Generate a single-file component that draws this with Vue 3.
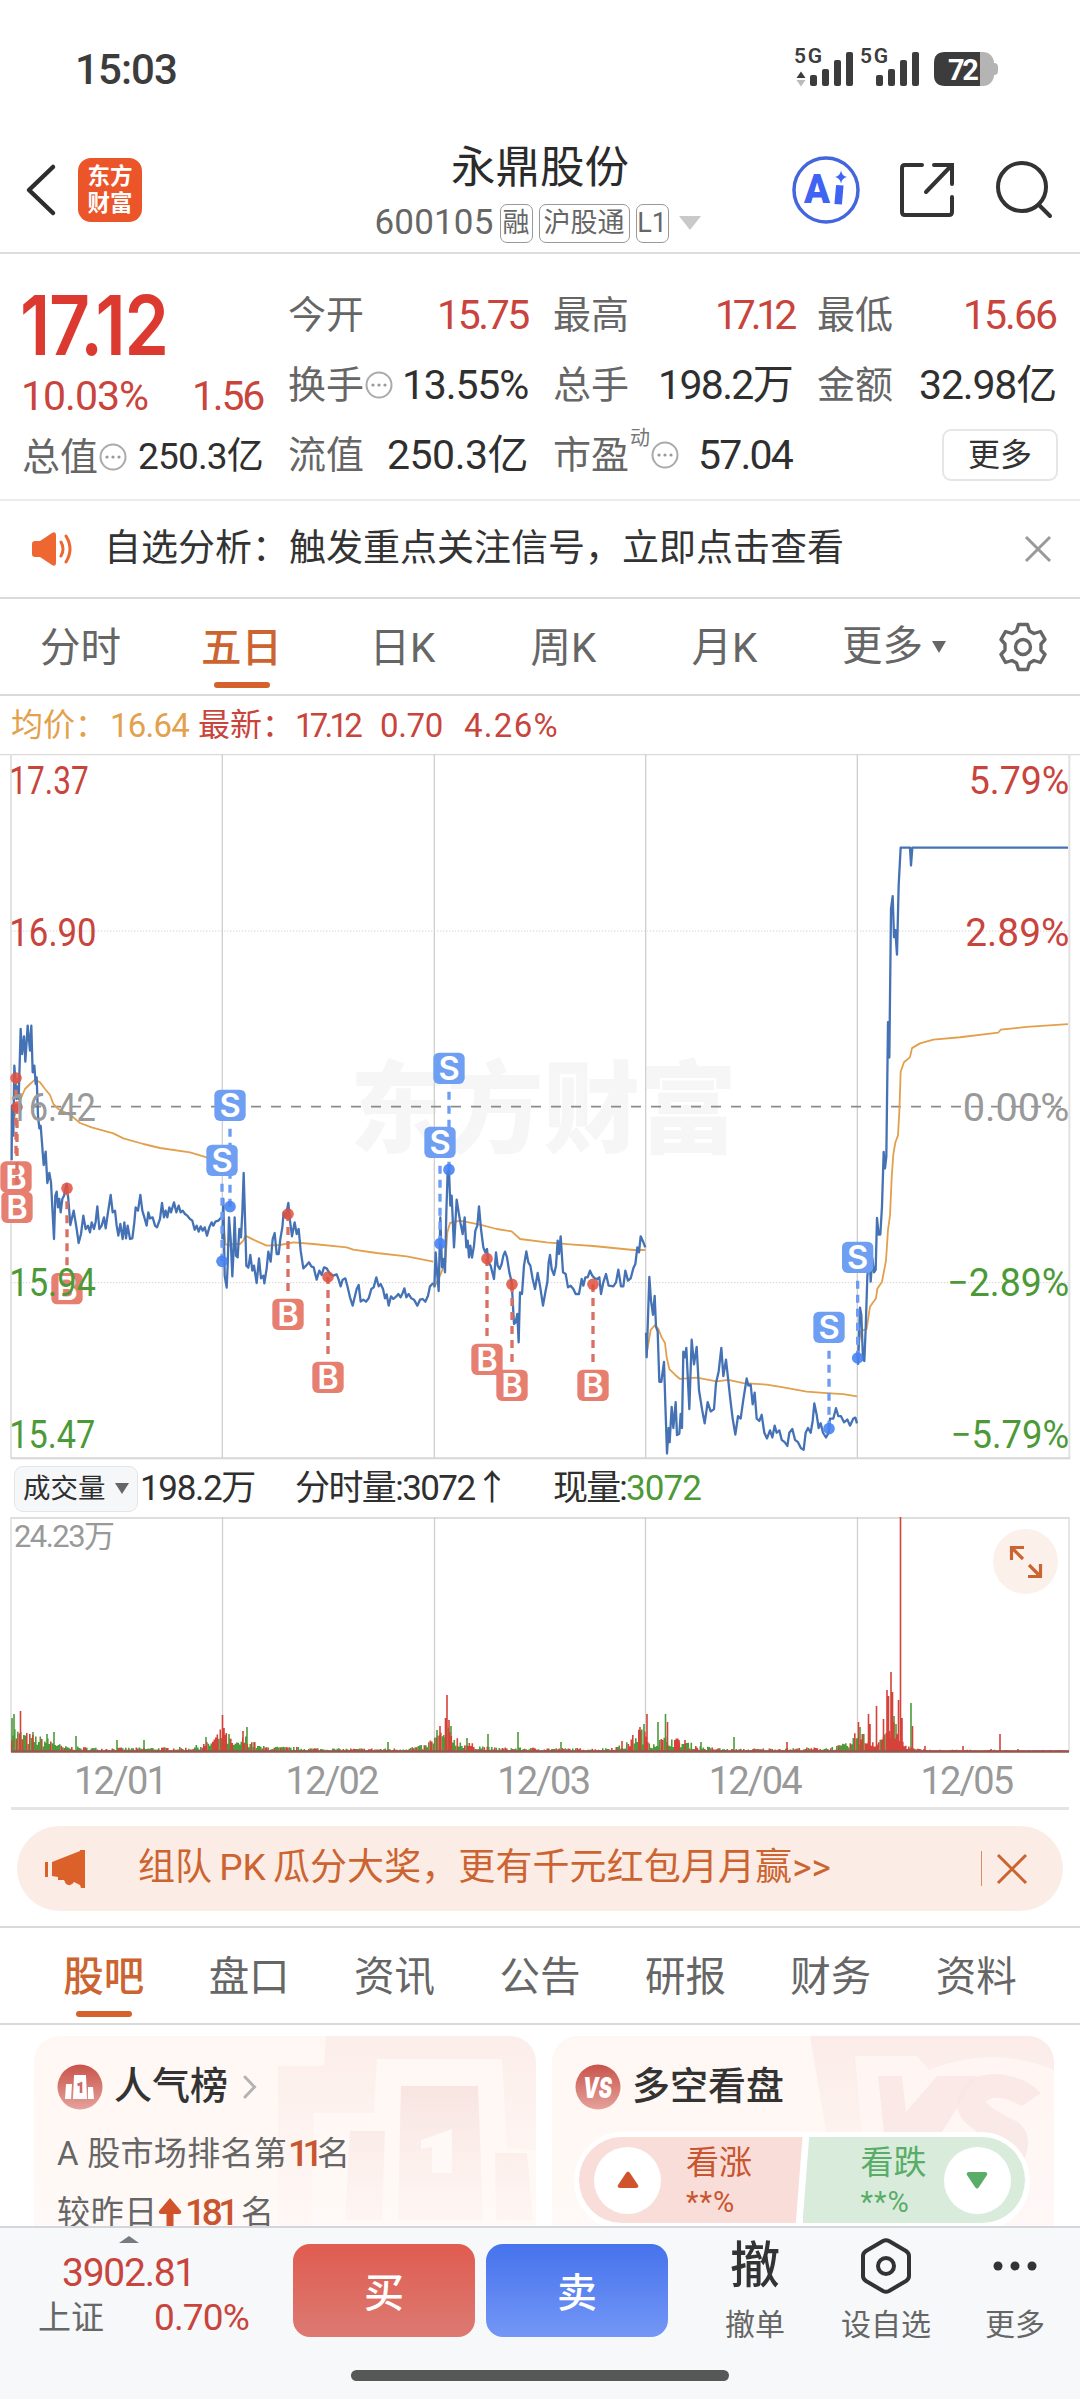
<template>
  <div class="page">
    <div class="status">
      <span v-fit="102" class="clock">15:03</span>
      <svg class="status-icons" width="206" height="54" viewBox="0 -10 206 54">
        <g fill="#3c3c3c">
          <text x="2" y="17" class="net" textLength="28">5G</text>
          <path d="M4.500 32 L9 25.500 L13.500 32 Z" />
          <path d="M4.500 34 L9 40.500 L13.500 34 Z" fill="#bbb" />
          <rect v-for="(h, i) in [11, 17, 26, 34]" :key="'a' + h" :x="18 + i * 12" :y="40 - h" width="7" :height="h" rx="2" />
          <text x="68" y="17" class="net" textLength="28">5G</text>
          <rect v-for="(h, i) in [11, 17, 26, 34]" :key="'b' + h" :x="84 + i * 12" :y="40 - h" width="7" :height="h" rx="2" />
        </g>
        <rect x="160" y="6" width="42" height="34" rx="11" fill="#b4b4b4" />
        <rect x="196" y="17" width="10" height="12" rx="4" fill="#b4b4b4" />
        <path d="M188 6 H153 Q142 6 142 17 V29 Q142 40 153 40 H188 Z" fill="#3c3c3c" />
        <text x="156" y="33.500" class="battery" textLength="31">72</text>
      </svg>
    </div>

    <header class="header">
      <div class="header-side">
        <svg width="34" height="54" viewBox="0 0 34 54"><path d="M30 4 L6 27 L30 50" fill="none" stroke="#2d2d2d" stroke-width="4.500" stroke-linecap="round" stroke-linejoin="round" /></svg>
        <div class="logo"><span>东方</span><span>财富</span></div>
      </div>
      <div class="title-box">
        <div class="title">永鼎股份</div>
        <div class="subtitle">
          <span v-fit="119" class="code">600105</span>
          <span class="tag">融</span>
          <span class="tag tag-wide">沪股通</span>
          <span class="tag">L1</span>
          <svg class="down" width="22" height="14" viewBox="0 0 22 14"><path d="M0 0 H22 L11 14 Z" fill="#c9c9c9" /></svg>
        </div>
      </div>
      <div class="header-side right">
        <svg width="70" height="70" viewBox="0 0 70 70">
          <circle cx="35" cy="35" r="32" fill="#fff" stroke="#4466dd" stroke-width="3.500" />
          <text x="13" y="48" class="ai" textLength="26" lengthAdjust="spacingAndGlyphs">A</text>
          <path d="M48.500 34 L47.500 45.500" stroke="#3f63f2" stroke-width="7.500" stroke-linecap="square" stroke-linejoin="round" />
          <path d="M50 15.500 Q51 21 56 22 Q51 23 50 28.500 Q49 23 44 22 Q49 21 50 15.500 Z" fill="#3f63f2" />
        </svg>
        <svg width="58" height="60" viewBox="0 0 58 60" fill="none" stroke="#333" stroke-width="4" stroke-linecap="round">
          <path d="M24 5 H7 Q4 5 4 8 V52 Q4 55 7 55 H51 Q54 55 54 52 V37" />
          <path d="M28 32 L53 6 M36 5 H54 V24" />
        </svg>
        <svg width="60" height="60" viewBox="0 0 60 60" fill="none" stroke="#333" stroke-width="4" stroke-linecap="round">
          <circle cx="27" cy="27" r="24" />
          <path d="M44 45 L55 56" />
        </svg>
      </div>
    </header>

    <section class="quote">
      <div class="quote-main">
        <div class="price-row"><span v-fit="172" class="price">17.12</span></div>
        <div class="pct-row"><span v-fit="127">10.03%</span><span v-fit="71">1.56</span></div>
        <div class="cell total-row">
          <span class="label">总值</span><InfoDot />
          <span v-fit="125" class="val small">250.3亿</span>
        </div>
      </div>
      <div v-for="c in cells" :key="c.label" class="cell">
        <span class="label">{{ c.label }}</span>
        <sup v-if="c.sup" class="sup">{{ c.sup }}</sup>
        <InfoDot v-if="c.dot" />
        <span v-fit="c.w" class="val" :class="{ red: c.red }">{{ c.value }}</span>
      </div>
      <div class="cell more-cell"><button class="more-btn">更多</button></div>
    </section>

    <div class="notice">
      <svg width="44" height="36" viewBox="0 0 44 36">
        <path d="M1 13 Q1 10 4 10 H9 L21 2 Q25 0 25 4 V32 Q25 36 21 34 L9 26 H4 Q1 26 1 23 Z" fill="#ee6630" />
        <path d="M30 11 Q34 18 30 25 M35 5 Q43 18 35 31" fill="none" stroke="#ee6630" stroke-width="3" stroke-linecap="round" />
      </svg>
      <span v-fit="740" class="notice-text">自选分析：触发重点关注信号，立即点击查看</span>
      <svg class="close" width="28" height="28" viewBox="0 0 28 28"><path d="M2 2 L26 26 M26 2 L2 26" stroke="#999" stroke-width="3" /></svg>
    </div>

    <nav class="period">
      <span v-for="t in periods" :key="t" class="tab" :class="{ active: t === '五日' }">{{ t }}</span>
      <span class="tab-more">更多<svg width="14" height="12" viewBox="0 0 14 12"><path d="M0 0 H14 L7 12 Z" fill="#666" /></svg></span>
      <svg class="gear" width="50" height="50" viewBox="0 0 50 50" fill="none" stroke="#666" stroke-width="3.400" stroke-linejoin="round">
        <path d="M20.500 2.500 H29.500 L31.500 9 L36 11.500 L42.500 9.500 L47 17.500 L43 22 V28 L47 32.500 L42.500 40.500 L36 38.500 L31.500 41 L29.500 47.500 H20.500 L18.500 41 L14 38.500 L7.500 40.500 L3 32.500 L7 28 V22 L3 17.500 L7.500 9.500 L14 11.500 L18.500 9 Z" />
        <circle cx="25" cy="25" r="7.500" />
      </svg>
    </nav>

    <div class="legend">
      <span class="avg">均价：</span><span v-fit="79" class="avg n1">16.64</span>
      <span class="lab">最新：</span><span v-fit="64" class="n2">17.12</span>
      <span v-fit="63" class="n3">0.70</span>
      <span v-fit="95" class="n4">4.26%</span>
    </div>

    <!-- price chart, drawn in thirds of a pixel -->
    <svg class="chart" width="1080" height="706" viewBox="0 0 3240 2118">
      <text class="watermark" x="1050" y="1172" textLength="1160" lengthAdjust="spacingAndGlyphs">东方财富</text>
      <path d="M0 2 H3240" stroke="#d9d9d9" stroke-width="4" />
      <path d="M33 0 V2114 M3208 0 V2114" stroke="#e2e2e2" stroke-width="6" />
      <path d="M667 0 V2114 M1303 0 V2114 M1937 0 V2114 M2572 0 V2114" stroke="#cfcfcf" stroke-width="4" />
      <path d="M33 531 H3208 M33 1586 H3208" stroke="#d2d2d2" stroke-width="3" stroke-dasharray="4 5" />
      <path d="M33 2113 H3210" stroke="#d6d6d6" stroke-width="6" />
      <path d="M33 1058 H3208" stroke="#8b8b8b" stroke-width="5" stroke-dasharray="30 30" />
      <g fill="none" stroke-linejoin="round">
        <polyline v-for="(l, i) in lines" :key="i" :points="l.points" :class="l.kind" :transform="l.at" vector-effect="non-scaling-stroke" />
      </g>
      <g v-for="(m, i) in marks" :key="'m' + i" :class="m.t === 'B' ? 'buy' : 'sell'">
        <path :d="`M${m.x} ${m.y + (m.t === 'B' ? -70 : 70)} V${m.dot}`" class="stem" />
        <circle :cx="m.x" :cy="m.dot" r="17.500" class="dot" />
        <rect :x="m.x - 47" :y="m.y - 47" width="94" height="94" rx="17" class="box" />
        <text :x="m.x" :y="m.y + 35" class="letter">{{ m.t }}</text>
      </g>
      <g class="axis">
        <text v-for="a in leftAxis" :key="a.v" x="28" :y="a.y" :textLength="a.w" lengthAdjust="spacingAndGlyphs" :class="a.c">{{ a.v }}</text>
        <text v-for="a in rightAxis" :key="a.v" :x="3208 - a.w" :y="a.y" :textLength="a.w" lengthAdjust="spacingAndGlyphs" :class="a.c">{{ a.v }}</text>
      </g>
    </svg>

    <div class="vol-head">
      <span class="vol-btn">成交量<svg width="14" height="11" viewBox="0 0 14 11"><path d="M0 0 H14 L7 11 Z" fill="#666" /></svg></span>
      <span v-fit="115" class="v1">198.2万</span>
      <span v-fit="213" class="v2">分时量:3072↑</span>
      <span v-fit="73" class="v3">现量:</span><span v-fit="75" class="green">3072</span>
    </div>

    <div class="vol">
      <svg width="1080" height="236" viewBox="0 0 1080 236">
        <path d="M11 1 H1069" stroke="#dedede" stroke-width="2" />
        <path d="M11 0 V235 M1069 0 V235" stroke="#dedede" stroke-width="1.500" />
        <path d="M222.500 0 V235 M434.500 0 V235 M645.500 0 V235 M857.500 0 V235" stroke="#d0d0d0" stroke-width="1.300" />
        <path :d="volume.green" stroke="#4d9a3a" stroke-width="1.600" />
        <path :d="volume.red" stroke="#d5423a" stroke-width="1.600" />
        <path d="M11 234.500 H1069" stroke="#94564f" stroke-width="2.400" />
        <text x="14" y="30" class="vol-max" textLength="101">24.23万</text>
      </svg>
      <div class="expand">
        <svg width="34" height="34" viewBox="0 0 34 34" fill="none" stroke="#cc6431" stroke-width="3.200">
          <path d="M15 2.500 H2.500 V15 M3 3 L14 14 M19 31.500 H31.500 V19 M31 31 L20 20" />
        </svg>
      </div>
    </div>
    <div class="dates"><span v-for="d in dates" :key="d"><i v-fit="92">{{ d }}</i></span></div>

    <div class="promo">
      <svg width="44" height="40" viewBox="0 0 44 40">
        <path d="M1 13 H4 V28 H1 Z M8 13 L36 2 V1 H41 V39 H37 L36 36 L30 33 Q27 38 22 35 L20 31 L14 31 L14 28 L8 27 Z" fill="#dc6029" />
      </svg>
      <span v-fit="693" class="promo-text">组队<em>PK</em>瓜分大奖，更有千元红包月月赢&gt;&gt;</span>
      <i class="promo-line"></i>
      <svg width="32" height="32" viewBox="0 0 32 32"><path d="M2 2 L30 30 M30 2 L2 30" stroke="#cc6431" stroke-width="3" /></svg>
    </div>

    <nav class="sections">
      <span v-for="t in sections" :key="t" class="sec" :class="{ active: t === '股吧' }">{{ t }}</span>
    </nav>

    <div class="cards">
      <div class="card">
        <svg class="card-bg" width="502" height="192" viewBox="0 0 502 192">
          <defs>
            <linearGradient id="fade" x1="0" y1="0" x2="0" y2="1">
              <stop offset="0" stop-color="#f6dedb" stop-opacity=".75" />
              <stop offset="1" stop-color="#fbeae6" stop-opacity=".25" />
            </linearGradient>
          </defs>
          <path d="M292 0 H502 V115 L473 112 L468 23 H343 L340 77 H280 L277 192 H244 V30 H290 Z" fill="url(#fade)" opacity=".5" />
          <path d="M316 95 H351 L348 184 H311 Z M367 50 H444 L449 184 H364 Z M461 117 H493 L499 184 H462 Z" fill="url(#fade)" />
          <path d="M387 104 L418 93 V137 H398 V111 L387 113 Z" fill="#fef8f6" />
        </svg>
        <div class="card-head">
          <svg width="46" height="46" viewBox="0 0 46 46">
            <defs>
              <linearGradient id="badge" x1="0" y1="0" x2="0" y2="1">
                <stop offset="0" stop-color="#c8534b" /><stop offset="1" stop-color="#e5a29b" />
              </linearGradient>
            </defs>
            <circle cx="23" cy="23" r="22.500" fill="url(#badge)" />
            <path d="M9 20 H15 L14 35 H8 Z M17 11 H29 L30 35 H16 Z M31 23 H36 L37 35 H31 Z" fill="#fff" />
            <path d="M20.500 21 L24 19.500 V29" fill="none" stroke="#cf6b64" stroke-width="2.600" />
          </svg>
          <span class="card-title">人气榜</span>
          <svg width="14" height="24" viewBox="0 0 14 24"><path d="M2 2 L11.500 12 L2 22" fill="none" stroke="#b3b3b3" stroke-width="3" stroke-linecap="round" /></svg>
        </div>
        <p class="rank"><span v-fit="230">A 股市场排名第</span><b v-fit="29">11</b>名</p>
        <p class="rank second">
          <span v-fit="101">较昨日</span>
          <svg width="24" height="31" viewBox="0 0 24 31"><path d="M12 0 L23 13 Q24 16 21 16 H15.500 V30 H8.500 V16 H3 Q0 16 1 13 Z" fill="#d1532b" /></svg>
          <b v-fit="50">181</b><span class="gap">名</span>
        </p>
      </div>

      <div class="card">
        <svg class="card-bg" width="502" height="192" viewBox="0 0 502 192">
          <path d="M258 0 H502 V192 H290 Z" fill="url(#fade)" opacity=".6" />
          <path d="M303 20 H365 L377 34 Q440 8 502 34 V192 H318 Z" fill="#fff8f5" opacity=".8" />
          <path d="M326 40 H350 L354 76 L385 40 H425 L372 125 H335 Z" fill="#f9e6e3" opacity=".8" />
          <path d="M489 57 Q470 38 440 38 Q408 40 405 66 Q405 82 420 92 Q432 100 428 108 Q418 116 390 104 L372 128 H470 Q484 100 466 86 Q440 74 434 66 Q444 56 470 70 Z" fill="#f9e6e3" opacity=".8" />
        </svg>
        <div class="card-head">
          <svg width="46" height="46" viewBox="0 0 46 46">
            <circle cx="23" cy="23" r="22.500" fill="url(#badge)" />
            <text x="8" y="34" class="vs-icon" textLength="29" lengthAdjust="spacingAndGlyphs">VS</text>
          </svg>
          <span class="card-title">多空看盘</span>
        </div>
        <div class="vote">
          <div class="vote-up">
            <span class="knob"><svg width="22" height="18" viewBox="0 0 22 18"><path d="M9 2 Q11 -1 13 2 L21 14 Q22 17 19 17 H3 Q0 17 1 14 Z" fill="#d1532b" /></svg></span>
            <span class="vote-text">看涨<small>**%</small></span>
          </div>
          <div class="vote-down">
            <span class="vote-text">看跌<small>**%</small></span>
            <span class="knob"><svg width="22" height="18" viewBox="0 0 22 18"><path d="M9 16 Q11 19 13 16 L21 4 Q22 1 19 1 H3 Q0 1 1 4 Z" fill="#5aad68" /></svg></span>
          </div>
        </div>
      </div>
    </div>

    <footer class="bottom">
      <div class="index">
        <svg width="20" height="7" viewBox="0 0 20 7"><path d="M10 0 L20 7 H0 Z" fill="#777a80" /></svg>
        <span v-fit="133" class="index-val">3902.81</span>
        <div class="index-row"><span>上证</span><span v-fit="95" class="index-pct">0.70%</span></div>
      </div>
      <button class="trade buy-btn">买</button>
      <button class="trade sell-btn">卖</button>
      <div class="tool cancel"><div class="tool-icon char">撤</div><span>撤单</span></div>
      <div class="tool pick">
        <div class="tool-icon">
          <svg width="52" height="56" viewBox="0 0 52 56" fill="none" stroke="#333" stroke-width="4" stroke-linejoin="round">
            <path d="M23 3 Q26 1.500 29 3 L46 13 Q49 15 49 18 V38 Q49 41 46 43 L29 53 Q26 54.500 23 53 L6 43 Q3 41 3 38 V18 Q3 15 6 13 Z" />
            <circle cx="26" cy="28" r="8" />
          </svg>
        </div>
        <span>设自选</span>
      </div>
      <div class="tool others">
        <div class="tool-icon">
          <svg width="44" height="12" viewBox="0 0 44 12" fill="#333"><circle cx="5" cy="6" r="4.500" /><circle cx="22" cy="6" r="4.500" /><circle cx="39" cy="6" r="4.500" /></svg>
        </div>
        <span>更多</span>
      </div>
      <i class="home-bar"></i>
    </footer>
  </div>
</template>

<script setup>
import { h } from 'vue'

// tracks a piece of text out (or in) to the given width
const vFit = {
  mounted(el, { value }) {
    const extra = value - el.getBoundingClientRect().width / (el.classList.contains('price') ? 0.86 : 1)
    el.style.letterSpacing = `${extra / el.textContent.length}px`
  }
}

const InfoDot = () => h('svg', { width: 28, height: 30, viewBox: '0 0 28 30' }, [
  h('circle', { cx: 14, cy: 15, r: 12.5, fill: 'none', stroke: '#aaa', 'stroke-width': 2 }),
  ...[8, 14, 20].map((cx) => h('circle', { cx, cy: 15, r: 1.6, fill: '#999' }))
])

const cells = [
  { label: '今开', value: '15.75', w: 91, red: true },
  { label: '最高', value: '17.12', w: 77, red: true },
  { label: '最低', value: '15.66', w: 93, red: true },
  { label: '换手', value: '13.55%', w: 126, dot: true },
  { label: '总手', value: '198.2万', w: 134 },
  { label: '金额', value: '32.98亿', w: 137 },
  { label: '流值', value: '250.3亿', w: 141 },
  { label: '市盈', value: '57.04', w: 94, sup: '动', dot: true }
]

const periods = ['分时', '五日', '日K', '周K', '月K']
const sections = ['股吧', '盘口', '资讯', '公告', '研报', '财务', '资料']
const dates = ['12/01', '12/02', '12/03', '12/04', '12/05']

const near = 'translate(0 735)'
const mid = 'translate(1200 735)'
const far = 'translate(1860 -45) scale(1 1.4158)'

const lines = [
  { kind: 'mean', at: near, points: '36,380 50,330 62,300 75,270 90,255 105,242 120,250 135,270 150,288 160,315 175,330 195,340 220,355 240,372 275,385 340,403 370,418 430,435 480,447 570,460 620,475 664,492' },
  { kind: 'mean', at: near, points: '670,660 676,735 686,740 700,735 720,735 730,725 736,710 760,722 800,740 840,738 880,730 940,735 1040,745 1060,752 1130,762 1220,772 1300,788' },
  { kind: 'mean', at: mid, points: '104,862 120,830 136,790 142,700 150,672 180,665 240,677 290,690 335,697 360,720 440,730 520,737 580,741 640,747 700,753 736,753' },
  { kind: 'mean', at: far, points: '82,1295 92,1252 105,1242 115,1250 125,1268 135,1280 140,1310 148,1335 165,1347 180,1356 230,1353 290,1361 325,1358 370,1365 440,1368 490,1374 560,1383 620,1386 670,1388 711,1393' },
  { kind: 'mean', at: far, points: '714,1300 722,1255 740,1250 750,1203 768,1185 772,1165 786,1150 798,1105 804,1040 810,1010 815,930 820,880 826,855 834,840 838,790 842,705 852,685 870,674 876,655 900,645 940,637 1020,632 1135,622 1142,616 1220,610 1344,604' },
  { kind: 'last', at: near, points: '35,484 36,320 40,410 43,200 47,260 49,300 52,262 56,300 62,90 66,165 72,112 76,188 83,80 90,155 94,80 98,220 103,200 107,255 110,235 114,350 118,388 122,380 131,498 137,458 142,552 148,522 153,550 162,720 166,590 170,578 174,625 178,600 182,640 187,600 192,590 200,555 205,600 211,678 221,635 230,690 236,732 243,705 250,650 257,690 264,680 270,700 275,670 282,690 287,668 292,622 298,690 305,680 312,655 317,688 324,640 332,588 338,640 345,635 350,680 355,710 361,675 368,720 373,670 378,718 383,680 390,720 397,718 403,670 407,625 414,635 421,588 427,635 433,655 440,680 445,640 450,658 458,655 465,680 471,685 480,660 486,612 492,655 497,635 502,655 508,625 513,640 522,610 529,640 536,620 542,640 548,635 555,645 562,650 570,660 577,665 584,692 590,680 596,698 602,682 608,695 614,685 621,710 628,685 635,670 640,680 646,668 655,665 664,655' },
  { kind: 'last', at: near, points: '667,720 670,600 674,830 680,866 683,800 687,655 692,720 697,832 700,770 704,655 708,770 713,775 718,690 723,715 727,640 731,522 736,690 739,800 745,806 751,768 757,815 762,800 770,852 777,778 783,838 790,830 793,853 800,808 805,758 812,788 818,720 824,702 830,765 836,765 841,720 847,685 851,640 857,655 865,612 870,665 876,712 884,670 890,705 896,690 902,755 910,808 918,800 927,790 934,802 941,805 950,842 958,815 965,828 972,805 980,808 990,825 1000,830 1010,826 1016,842 1022,862 1028,842 1036,838 1043,865 1050,895 1058,920 1064,895 1070,870 1076,858 1082,908 1090,902 1098,908 1106,898 1114,870 1121,865 1129,835 1136,862 1142,855 1149,870 1155,898 1160,886 1166,920 1173,892 1180,900 1188,893 1195,885 1202,895 1208,882 1213,868 1219,895 1226,885 1234,898 1242,902 1252,920 1260,902 1268,900 1276,908 1284,890 1290,862 1300,852' },
  { kind: 'last', at: mid, points: '103,865 107,760 112,830 116,876 121,655 126,805 131,780 135,820 139,640 143,520 147,515 151,620 155,590 162,745 170,602 176,640 182,675 188,705 194,655 199,745 203,725 207,775 211,740 216,776 222,740 226,695 232,680 237,622 243,690 250,745 256,760 261,750 265,790 272,800 282,840 288,760 293,800 299,810 305,795 310,770 315,758 321,775 328,820 335,850 342,975 347,970 352,945 356,1030 360,880 366,885 372,800 379,757 385,790 391,800 398,840 405,870 413,822 420,860 429,920 436,880 442,850 446,790 450,768 455,810 462,828 468,800 473,725 477,765 482,712 489,820 497,825 504,865 512,860 520,870 527,885 537,885 545,840 550,860 556,835 563,835 570,815 577,830 584,838 592,840 598,835 603,885 610,850 618,825 626,860 640,862 648,850 655,812 663,862 670,862 676,815 684,845 692,838 700,808 706,795 712,745 717,760 722,712 730,730 736,745' },
  { kind: 'last', at: far, points: '78,1258 80,1310 88,1140 93,1190 99,1220 104,1180 108,1245 113,1255 118,1362 124,1362 132,1320 137,1430 141,1514 146,1460 149,1490 155,1415 160,1460 167,1405 171,1475 178,1472 182,1430 186,1460 190,1298 195,1310 199,1290 208,1420 215,1273 222,1325 230,1288 237,1380 246,1420 254,1450 263,1405 272,1425 282,1420 288,1365 296,1340 304,1290 310,1350 318,1315 325,1360 331,1400 338,1440 346,1474 354,1435 362,1440 370,1400 380,1355 385,1370 392,1368 398,1410 404,1385 410,1440 418,1445 425,1432 433,1470 441,1482 450,1465 457,1480 464,1455 470,1470 478,1465 485,1485 494,1490 502,1498 508,1470 517,1462 525,1485 534,1490 543,1503 551,1506 557,1470 564,1460 572,1470 578,1445 583,1408 590,1432 596,1460 602,1450 609,1470 618,1480 626,1470 630,1440 640,1440 648,1418 655,1435 663,1435 672,1448 682,1442 690,1455 700,1440 706,1438 711,1450' },
  { kind: 'last', at: far, points: '714,1326 720,1205 724,1220 729,1315 733,1318 737,1250 742,1140 748,1085 752,1150 757,1100 762,1130 767,1125 771,1015 776,1050 781,1050 786,990 791,875 795,910 799,885 804,600 808,675 813,360 818,333 822,420 826,405 831,457 836,310 842,230 870,230 873,268 877,230 1344,230' }
]

// [type, x, badge y, dot y]
const marks = [
  ['B', 48, 1269, 972], ['B', 51, 1360, 1059], ['B', 201, 1604, 1303],
  ['S', 690, 1054, 1358], ['S', 666, 1219, 1522], ['B', 864, 1681, 1380], ['B', 984, 1870, 1569],
  ['S', 1347, 943, 1247], ['S', 1320, 1165, 1469], ['B', 1461, 1816, 1514], ['B', 1536, 1894, 1591], ['B', 1779, 1894, 1591],
  ['S', 2487, 1720, 2024], ['S', 2573, 1510, 1812]
].map(([t, x, y, dot]) => ({ t, x, y, dot }))

const leftAxis = [
  { v: '17.37', y: 120, w: 238, c: 'up' },
  { v: '16.90', y: 576, w: 262, c: 'up' },
  { v: '16.42', y: 1101, w: 260, c: 'flat' },
  { v: '15.94', y: 1627, w: 260, c: 'down' },
  { v: '15.47', y: 2083, w: 258, c: 'down' }
]
const rightAxis = [
  { v: '5.79%', y: 120, w: 302, c: 'up' },
  { v: '2.89%', y: 576, w: 312, c: 'up' },
  { v: '0.00%', y: 1101, w: 320, c: 'flat' },
  { v: '−2.89%', y: 1627, w: 366, c: 'down' },
  { v: '−5.79%', y: 2083, w: 356, c: 'down' }
]

// envelope of the minute volume, then the single minutes that stick out
const envelope = [[11, 30], [16, 20], [30, 15], [55, 10], [62, 5], [100, 3.5], [190, 4], [210, 9], [222, 20], [235, 7], [245, 14], [260, 5], [300, 4], [330, 3], [400, 3], [425, 6], [437, 16], [449, 20], [462, 9], [490, 4], [600, 3], [625, 6], [640, 22], [652, 9], [668, 14], [700, 5], [730, 2.5], [830, 4], [850, 8], [858, 20], [866, 14], [878, 10], [890, 30], [904, 8], [915, 3], [930, 2], [1068, 1.5]]
const spikes = [
  [12, 34, 'g'], [14, 38, 'g'], [20.5, 41, 'r'], [33, 20, 'g'], [47, 18, 'g'], [54, 20, 'g'], [76, 16, 'g'], [117, 12, 'g'], [144, 12, 'g'], [206, 15, 'g'],
  [222.5, 37, 'r'], [224, 24, 'r'], [229, 18, 'g'], [243, 21, 'r'], [247, 25, 'g'], [254, 10, 'g'], [388, 10, 'g'], [437, 22, 'g'], [440, 26, 'r'],
  [445.5, 34, 'r'], [447, 57, 'r'], [449, 32, 'r'], [451, 26, 'g'], [467, 14, 'g'], [488, 18, 'g'], [518, 20, 'g'], [561, 10, 'g'], [622, 11, 'r'], [640, 25, 'r'],
  [644, 28, 'g'], [647, 38, 'r'], [658, 30, 'g'], [665.5, 38, 'g'], [667.5, 30, 'r'], [679, 12, 'r'], [685, 12, 'r'], [701, 10, 'g'], [734, 15, 'g'], [787, 10, 'r'],
  [858.5, 30, 'r'], [860, 25, 'g'], [868.5, 38, 'r'], [870, 28, 'r'], [876.5, 46, 'r'], [883.5, 33, 'r'], [887, 62, 'r'], [888.5, 56, 'r'], [891, 80, 'r'], [892.5, 60, 'r'], [894, 36, 'g'],
  [896, 28, 'g'], [898.5, 52, 'r'], [900.5, 235, 'r'], [902, 34, 'r'], [911, 49, 'g'], [912.5, 26, 'r'], [925, 6, 'r'], [963, 6, 'r'], [991, 3, 'r'], [1000, 18, 'r'], [1018, 3, 'r']
]

function buildVolume() {
  const out = { red: '', green: '' }
  let seed = 7
  const rand = () => {
    seed = (seed * 16807) % 2147483647
    return seed / 2147483647
  }
  let k = 0
  for (let x = 11.8; x < 1068; x += 1.5) {
    while (envelope[k + 1][0] < x) k++
    const [x0, y0] = envelope[k]
    const [x1, y1] = envelope[k + 1]
    const level = y0 + ((y1 - y0) * (x - x0)) / (x1 - x0)
    const height = Math.max(1.5, level * (0.4 + rand() * 0.85))
    const key = rand() > (x > 860 ? 0.2 : 0.6) ? 'red' : 'green'
    out[key] += `M${x.toFixed(1)} 235v-${height.toFixed(1)}`
  }
  for (const [x, height, c] of spikes) out[c === 'r' ? 'red' : 'green'] += `M${x} 235v-${height}`
  return out
}
const volume = buildVolume()
</script>

<style>
body { background: #fff; }
</style>

<style scoped>
.page {
  width: 1080px;
  height: 2400px;
  overflow: hidden;
  background: #fff;
  color: #333;
  font-family: Roboto, "Noto Sans CJK SC", sans-serif;
  line-height: 1.2;
  display: flex;
  flex-direction: column;
  white-space: nowrap;
}
.page > * { flex: none; box-sizing: border-box; }
svg { display: block; flex: none; }
i, em { font-style: normal; }

.status {
  height: 130px;
  padding: 46px 82px 0 75px;
  display: flex;
  justify-content: space-between;
}
.status-icons { margin-top: -10px; }
.clock { font-size: 42px; font-weight: 500; line-height: 48px; color: #3c3c3c; height: 48px; }
.net { font-size: 21px; font-weight: 600; }
.battery { font-size: 29px; font-weight: 700; fill: #fff; }

.header {
  height: 124px;
  border-bottom: 2px solid #dcdcdc;
  display: grid;
  grid-template-columns: 300px 480px 300px;
}
.header-side { display: flex; align-items: center; padding: 0 0 3px 23px; gap: 21px; }
.logo {
  width: 64px; height: 64px; border-radius: 13px; background: #ec5429; color: #fff;
  display: flex; flex-direction: column; align-items: center; justify-content: center;
  font-size: 22.500px; font-weight: 700; line-height: 27px;
}
.right { padding: 0 25px 3px 0; justify-content: flex-end; gap: 39px; }
.right svg:first-child { margin-right: -2px; }
.title-box { display: flex; flex-direction: column; align-items: center; }
.title { font-size: 44.500px; line-height: 56px; margin-top: 10px; color: #2b2b2b; }
.subtitle { display: flex; align-items: center; height: 42px; margin-top: 6px; margin-left: -5px; color: #666; }
.code { font-size: 35px; }
.tag {
  box-sizing: border-box; height: 39px; width: 33px; border: 1.500px solid #999; border-radius: 7px;
  font-size: 27px; line-height: 37px; margin-left: 6px; display: flex; justify-content: center;
}
.tag-wide { width: 91px; }
.down { margin-left: 10px; }
.ai { font: 900 40px Roboto; fill: #3f63f2; }

.quote {
  height: 247px;
  padding: 26px 24px 0 22px;
  border-bottom: 2px solid #ececec;
  display: grid;
  grid-template-columns: 241px 240px 239px 239px;
  grid-template-rows: 70px 70px 70px;
  column-gap: 25px;
}
.quote-main { grid-row: 1 / 4; }
.price-row { height: 90px; display: flex; align-items: center; }
.price {
  font: 600 83px/90px Inter, Roboto, sans-serif; color: #dc3a31;
  transform: scaleX(.86); transform-origin: left; margin-left: -2px;
}
.pct-row { height: 53px; display: flex; align-items: center; justify-content: space-between; font-size: 41px; color: #c8443c; }
.pct-row span:first-child { margin-left: -1px; }
.cell { display: flex; align-items: center; font-size: 41px; line-height: 60px; color: #2f2f2f; }
.total-row { height: 67px; }
.label { font-size: 38px; color: #666; }
.cell svg { margin-left: 1px; }
.val { margin-left: auto; }
.small { font-size: 37px; }
.red { color: #c8443c; }
.sup { font-size: 20px; line-height: 20px; color: #777; align-self: flex-start; margin: 8px 0 0 1px; }
.more-cell { justify-content: flex-end; }
.more-btn {
  width: 116px; height: 52px; border: 2px solid #e6e6e6; border-radius: 9px; background: #fff; padding: 0;
  font: 32px/46px Roboto, "Noto Sans CJK SC", sans-serif; color: #333; margin: 0 -2px 0 0;
}

.notice { height: 98px; border-bottom: 2px solid #dadada; display: flex; align-items: center; padding: 0 28px 0 31px; }
.notice-text { font-size: 37px; margin-left: 29px; }
.close { margin-left: auto; }

.period { height: 97px; border-bottom: 2px solid #dadada; display: flex; align-items: center; color: #666; font-size: 40.500px; }
.tab { width: 161px; height: 100%; display: flex; flex-direction: column; align-items: center; line-height: 98px; }
.tab::after, .sec::after { content: ""; width: 56px; height: 6px; border-radius: 3px; margin-top: -15px; }
.active { color: #cc6431; font-weight: 500; }
.active::after { background: #d5622d; }
.tab-more { display: flex; align-items: center; margin-left: 37px; gap: 9px; }
.gear { margin-left: 52px; }

.legend { height: 58px; display: flex; align-items: center; padding: 1px 0 0 11px; font-size: 33px; line-height: 57px; color: #c8443c; }
.legend .avg { color: #e3a04d; }
.legend > span:first-child, .lab { font-size: 32px; }
.legend > span:first-child { width: 99px; }
.lab { width: 97px; margin-left: 9px; }
.n3 { margin-left: 21px; }
.n4 { margin-left: 21px; }

.watermark { font: 900 300px "Noto Sans CJK SC"; fill: #f6f6f6; }
.last { stroke: #4472b4; stroke-width: 2.300px; }
.mean { stroke: #e2a04c; stroke-width: 1.800px; }
.stem { stroke-width: 10px; stroke-dasharray: 24 18; fill: none; }
.letter { font: 600 98px Inter, Roboto, sans-serif; fill: #fff; text-anchor: middle; }
.buy .stem { stroke: #d97064; }
.buy .dot { fill: #df5040; opacity: .85; }
.buy .box { fill: #e77f70; }
.sell .stem { stroke: #6c9df0; }
.sell .dot { fill: #4481f1; opacity: .88; }
.sell .box { fill: #6f9ff3; }
.axis { font-size: 115px; }
.up { fill: #c8443c; }
.down { fill: #4c9a37; }
.flat { fill: #999; }

.vol-head { height: 57px; display: flex; align-items: center; padding-left: 14px; font-size: 35px; color: #2f2f2f; }
.vol-btn {
  box-sizing: border-box; width: 124px; height: 46px; border: 1.500px solid #e3e5e8; border-radius: 9px; background: #f6f7f9;
  display: flex; align-items: center; padding-left: 8px; gap: 9px; font-size: 27.500px;
}
.v1 { margin-left: 2px; }
.v2 { margin-left: 40px; font-size: 35px; }
.v3 { margin-left: 45px; }
.green { color: #4c9a37; }
.vol { position: relative; height: 236px; }
.vol-max { font-size: 31px; fill: #999; }
.expand {
  position: absolute; right: 22px; top: 12px; width: 65px; height: 65px; border-radius: 50%;
  background: #fbf1ea; display: flex; align-items: center; justify-content: center;
}
.dates {
  height: 57px; margin: 0 11px; border-bottom: 3px solid #e4e4e4;
  display: flex; font-size: 38px; line-height: 57px; color: #999;
}
.dates span { flex: 1; padding-left: 63px; }

.promo {
  height: 85px; margin: 16px 17px 15px; border-radius: 43px; background: #fbede6;
  display: flex; align-items: center; padding: 0 35px 0 27px; color: #cc6431;
}
.promo-text { font-size: 37px; margin-left: 50px; }
.promo-text em { margin: 0 7px; }
.promo-line { width: 1.500px; height: 35px; background: #d98b66; margin: 0 14px 0 auto; }

.sections {
  height: 99px; border-top: 2px solid #dadada; border-bottom: 2px solid #dadada;
  display: flex; padding: 0 31px; color: #666; font-size: 40.500px;
}
.sec { flex: 1; display: flex; flex-direction: column; align-items: center; line-height: 98px; }

.cards { display: flex; gap: 16px; padding: 11px 26px 0 34px; height: 201px; overflow: hidden; }
.card {
  position: relative; width: 502px; height: 240px; border-radius: 26px 26px 0 0; overflow: hidden;
  background: linear-gradient(#fff7f3, #fffaf8);
}
.card-bg { position: absolute; left: 0; top: 0; }
.card-head { position: relative; display: flex; align-items: center; height: 46px; margin: 28px 0 0 23px; }
.card-title { font-size: 38px; font-weight: 500; margin: 0 15px 0 11px; }
.rank { position: relative; margin: 20px 0 0 23px; font-size: 33px; line-height: 48px; color: #666; display: flex; align-items: center; }
.rank b { font-weight: 500; font-size: 37px; color: #c9552f; margin: 0 0 0 1px; }
.rank.second { margin-top: 11px; }
.second svg { margin-right: 2px; }
.gap { margin-left: 6px; }
.vs-icon { font: italic 900 28px Inter; fill: #fff; }
.vote {
  position: relative; box-sizing: border-box; width: 456px; height: 98px; margin: 22px 0 0 22px; padding: 5px;
  border-radius: 49px; background: #fff; display: flex;
}
.vote > div { height: 86px; display: flex; align-items: center; }
.vote-up {
  width: 224px; border-radius: 43px 0 0 43px; background: #f8ddd8; color: #c9552f;
  clip-path: polygon(0 0, 100% 0, 97% 100%, 0 100%);
}
.vote-down {
  width: 223px; border-radius: 0 43px 43px 0; background: #d9ecdc; color: #5aad68;
  clip-path: polygon(3% 0, 100% 0, 100% 100%, 0 100%);
}
.knob { width: 67px; height: 67px; border-radius: 50%; background: #fff; display: flex; align-items: center; justify-content: center; }
.vote-up .knob { margin: 0 25px 0 15px; }
.vote-down .knob { margin-left: 18px; }
.vote-text { width: 65px; font-size: 33px; line-height: 44px; display: flex; flex-direction: column; }
.vote-text small { font-size: 29px; line-height: 34px; letter-spacing: 1px; }
.vote-down .vote-text { margin-left: 58px; }

.bottom {
  position: relative; height: 173px; background: #f6f8fa; border-top: 2px solid #d3d6da; display: flex; padding-top: 16px;
}
.index { width: 293px; margin-top: -8px; }
.index svg { margin-left: 119px; }
.index-val { display: inline-block; font-size: 39px; line-height: 44px; margin: 8px 0 0 62px; color: #c8443c; height: 44px; }
.index-row { display: flex; align-items: center; padding-left: 38px; height: 46px; font-size: 33px; color: #666; }
.index-pct { margin-left: 50px; font-size: 37px; color: #c8443c; }
.trade {
  width: 182px; height: 93px; border: 0; border-radius: 17px; padding: 0; color: #fff;
  font: 500 40px/93px "Noto Sans CJK SC", sans-serif;
}
.buy-btn { background: linear-gradient(#e05c50, #dc7a72); margin-right: 11px; }
.sell-btn { background: linear-gradient(#4673ed, #7397f6); }
.tool { display: flex; flex-direction: column; align-items: center; font-size: 30px; line-height: 40px; color: #666; }
.tool > span { padding-top: 2px; }
.tool-icon { height: 58px; display: flex; align-items: center; margin: -7px 0 8px; }
.char { font-size: 50px; font-weight: 500; line-height: 64px; color: #333; }
.cancel { margin-left: 57px; }
.pick { margin-left: 56px; }
.others { margin-left: 54px; }
.home-bar { position: absolute; left: 351px; bottom: 18px; width: 378px; height: 11px; border-radius: 6px; background: #555857; }
</style>
